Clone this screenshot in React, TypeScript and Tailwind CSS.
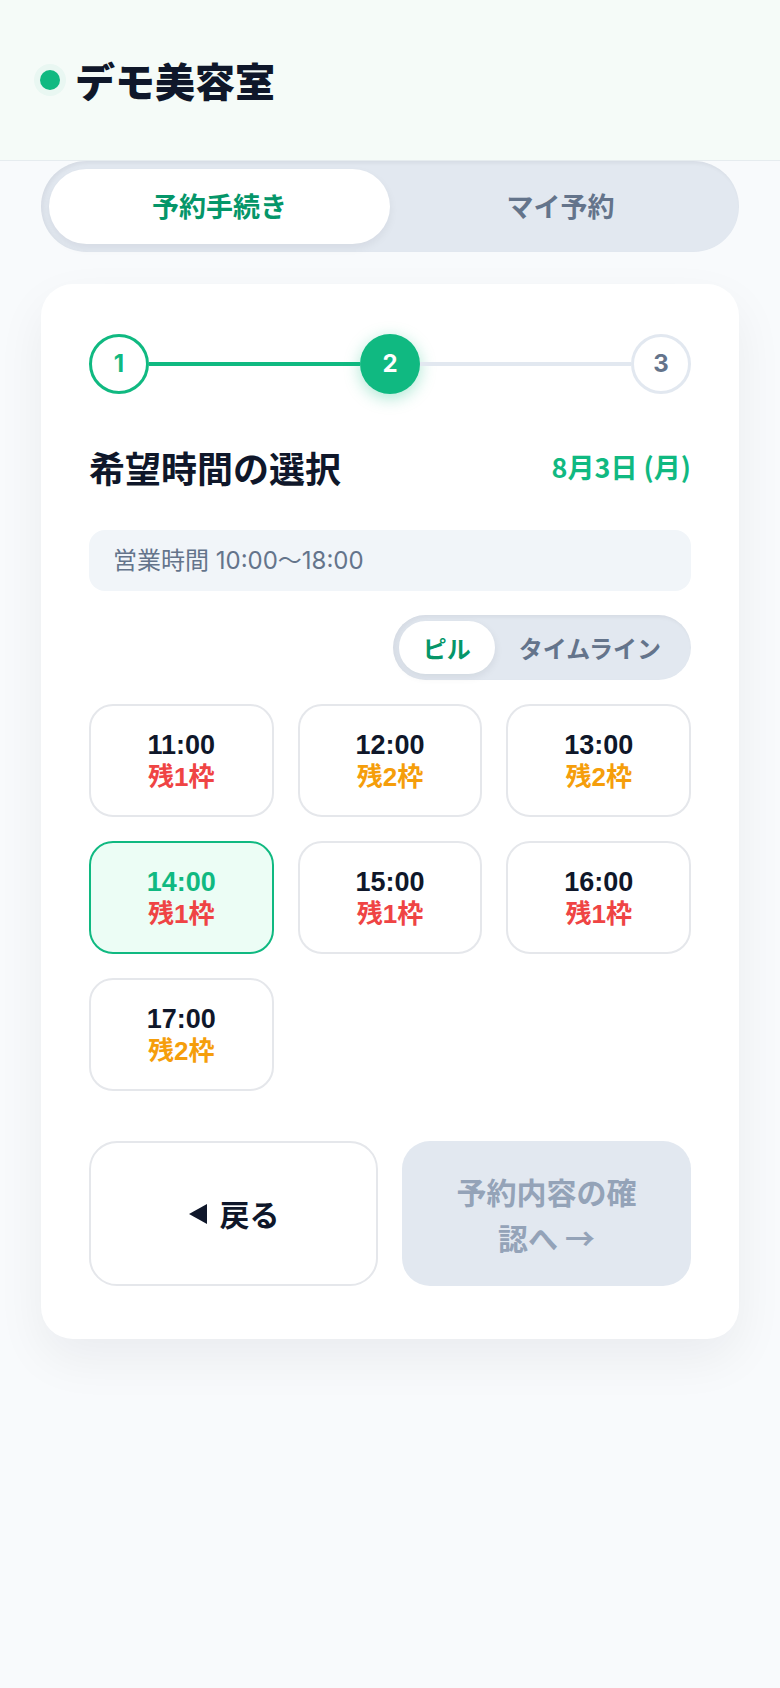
import { useState } from 'react';

const slots = [
  { time: '11:00', left: 1 },
  { time: '12:00', left: 2 },
  { time: '13:00', left: 2 },
  { time: '14:00', left: 1 },
  { time: '15:00', left: 1 },
  { time: '16:00', left: 1 },
  { time: '17:00', left: 2 },
];

export default function App() {
  const [tab, setTab] = useState<'book' | 'mine'>('book');
  const [view, setView] = useState<'pill' | 'timeline'>('pill');
  const [selected, setSelected] = useState('14:00');

  return (
    <div className="min-h-screen bg-[#f8fafc] font-['Inter','Noto_Sans_CJK_JP',sans-serif] pb-20">
      {/* Header */}
      <header className="h-[161px] bg-[#f5fbf8] border-b border-[#e6ecef] flex items-center pl-10 gap-[15px]">
        <span className="w-5 h-5 rounded-full bg-[#10b981] shadow-[0_0_0_6px_rgba(16,185,129,0.05)]" />
        <h1 className="text-[40px] font-extrabold text-[#0f172a] font-['Noto_Sans_CJK_JP',sans-serif] leading-none">
          デモ美容室
        </h1>
      </header>

      <main className="px-[41px]">
        {/* Tabs */}
        <div className="h-[91px] rounded-full bg-[#e2e8f0] p-2 flex shadow-[inset_2px_2px_4px_rgba(15,23,42,0.06)]">
          <button
            onClick={() => setTab('book')}
            className={`flex-1 rounded-full text-[27px] font-bold font-['Noto_Sans_CJK_JP',sans-serif] ${
              tab === 'book' ? 'bg-white text-[#059669] shadow-[0_4px_10px_rgba(15,23,42,0.06)]' : 'text-[#64748b]'
            }`}
          >
            予約手続き
          </button>
          <button
            onClick={() => setTab('mine')}
            className={`flex-1 rounded-full text-[27px] font-bold font-['Noto_Sans_CJK_JP',sans-serif] ${
              tab === 'mine' ? 'bg-white text-[#059669] shadow-[0_4px_10px_rgba(15,23,42,0.06)]' : 'text-[#64748b]'
            }`}
          >
            マイ予約
          </button>
        </div>

        {/* Card */}
        <section className="mt-8 bg-white rounded-[32px] px-12 pt-12 pb-[53px] shadow-[0_20px_50px_rgba(15,23,42,0.06)]">
          {/* Stepper */}
          <div className="flex items-center h-[60px] mt-[2px]">
            <div className="w-[60px] h-[60px] rounded-full border-[3px] border-[#10b981] bg-white text-[#10b981] flex items-center justify-center text-[24px] font-bold">
              1
            </div>
            <div className="flex-1 h-1 bg-[#10b981]" />
            <div className="w-[60px] h-[60px] rounded-full bg-[#10b981] text-white flex items-center justify-center text-[24px] font-bold shadow-[0_4px_16px_rgba(16,185,129,0.35)]">
              2
            </div>
            <div className="flex-1 h-1 bg-[#e2e8f0]" />
            <div className="w-[60px] h-[60px] rounded-full border-[3px] border-[#e2e8f0] bg-white text-[#64748b] flex items-center justify-center text-[24px] font-bold">
              3
            </div>
          </div>

          {/* Title */}
          <div className="mt-[50px] flex items-center justify-between font-['Noto_Sans_CJK_JP',sans-serif]">
            <h2 className="text-[36px] font-bold text-[#0f172a] leading-[46px]">希望時間の選択</h2>
            <span className="text-[27px] font-bold text-[#10b981]">8月3日 (月)</span>
          </div>

          {/* Business hours */}
          <div className="mt-10 h-[61px] rounded-2xl bg-[#f1f5f9] px-6 flex items-center text-[24px] text-[#64748b]">
            営業時間 10:00〜18:00
          </div>

          {/* View toggle */}
          <div className="mt-6 flex justify-end">
            <div className="h-[65px] rounded-full bg-[#e2e8f0] p-[6px] flex shadow-[inset_2px_2px_4px_rgba(15,23,42,0.06)] font-['Noto_Sans_CJK_JP',sans-serif]">
              <button
                onClick={() => setView('pill')}
                className={`rounded-full px-6 text-[24px] font-bold ${
                  view === 'pill' ? 'bg-white text-[#059669] shadow-[0_3px_8px_rgba(15,23,42,0.08)]' : 'text-[#64748b]'
                }`}
              >
                ピル
              </button>
              <button
                onClick={() => setView('timeline')}
                className={`rounded-full px-6 text-[24px] font-bold ${
                  view === 'timeline' ? 'bg-white text-[#059669] shadow-[0_3px_8px_rgba(15,23,42,0.08)]' : 'text-[#64748b]'
                }`}
              >
                タイムライン
              </button>
            </div>
          </div>

          {/* Slots */}
          <div className="mt-6 grid grid-cols-3 gap-6">
            {slots.map((s) => {
              const active = s.time === selected;
              return (
                <button
                  key={s.time}
                  onClick={() => setSelected(s.time)}
                  className={`h-[113px] rounded-[24px] border-2 flex flex-col items-center justify-center font-['Liberation_Sans','Noto_Sans_CJK_JP',sans-serif] font-bold ${
                    active ? 'border-[#10b981] bg-[#ecfdf5]' : 'border-[#e5e7eb] bg-white'
                  }`}
                >
                  <span className={`text-[27px] leading-[32px] ${active ? 'text-[#10b981]' : 'text-[#0f172a]'}`}>
                    {s.time}
                  </span>
                  <span className={`text-[26px] leading-[32px] ${s.left === 1 ? 'text-[#ef4444]' : 'text-[#f59e0b]'}`}>
                    残{s.left}枠
                  </span>
                </button>
              );
            })}
          </div>

          {/* Actions */}
          <div className="mt-[50px] grid grid-cols-2 gap-6 font-['Noto_Sans_CJK_JP',sans-serif]">
            <button className="h-[145px] rounded-[28px] border-2 border-[#e5e7eb] bg-white flex items-center justify-center gap-3 text-[30px] font-bold text-[#0f172a]">
              <svg width="20" height="22" viewBox="0 0 20 22" fill="#0f172a">
                <polygon points="19,1 19,21 1,11" />
              </svg>
              戻る
            </button>
            <button
              disabled
              className="h-[145px] rounded-[28px] bg-[#e2e8f0] flex items-center justify-center text-[30px] font-bold text-[#94a3b8]"
            >
              <span className="max-w-[200px] leading-[46px] text-center">予約内容の確認へ →</span>
            </button>
          </div>
        </section>
      </main>
    </div>
  );
}
